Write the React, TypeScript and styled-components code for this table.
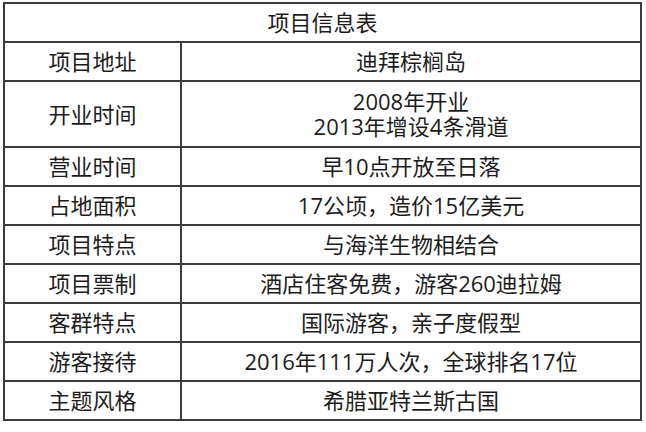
import React from "react";
import styled, { createGlobalStyle } from "styled-components";

const Global = createGlobalStyle`
  html, body { margin: 0; padding: 0; background: #ffffff; }
  body {
    font-family: "Open Sans", "Noto Sans CJK SC", "Noto Sans", sans-serif;
    color: #1c1c1c;
  }
`;

const Page = styled.div`
  width: 646px;
  height: 432px;
  padding: 2px 0 0 3px;
  box-sizing: border-box;
  background: #fff;
`;

const Sheet = styled.div`
  width: 639px;
  box-sizing: border-box;
  border: 2px solid #3b3b3b;
  display: flex;
  flex-direction: column;
`;

const Title = styled.div`
  height: 39px;
  box-sizing: border-box;
  border-bottom: 2px solid #3b3b3b;
  display: flex;
  align-items: center;
  justify-content: center;
  font-size: 22px;
  line-height: 25px;
`;

const Row = styled.div<{ $h: number; $last?: boolean }>`
  height: ${(p) => p.$h}px;
  box-sizing: border-box;
  border-bottom: ${(p) => (p.$last ? "none" : "2px solid #3b3b3b")};
  display: grid;
  grid-template-columns: 177px 1fr;
`;

const Cell = styled.div<{ $divider?: boolean }>`
  box-sizing: border-box;
  border-right: ${(p) => (p.$divider ? "2px solid #3b3b3b" : "none")};
  display: flex;
  flex-direction: column;
  align-items: center;
  justify-content: center;
  font-size: 22px;
  line-height: 25px;
  white-space: nowrap;
`;

const Line = styled.div`
  height: 25px;
  line-height: 25px;
  overflow: visible;
`;

const rows: { label: string; value: string[]; h: number }[] = [
  { label: "项目地址", value: ["迪拜棕榈岛"], h: 39 },
  { label: "开业时间", value: ["2008年开业", "2013年增设4条滑道"], h: 66 },
  { label: "营业时间", value: ["早10点开放至日落"], h: 39 },
  { label: "占地面积", value: ["17公顷，造价15亿美元"], h: 39 },
  { label: "项目特点", value: ["与海洋生物相结合"], h: 39 },
  { label: "项目票制", value: ["酒店住客免费，游客260迪拉姆"], h: 39 },
  { label: "客群特点", value: ["国际游客，亲子度假型"], h: 39 },
  { label: "游客接待", value: ["2016年111万人次，全球排名17位"], h: 39 },
  { label: "主题风格", value: ["希腊亚特兰斯古国"], h: 37 },
];

export default function App() {
  return (
    <>
      <Global />
      <Page>
        <Sheet>
          <Title>项目信息表</Title>
          {rows.map((r, i) => (
            <Row key={r.label} $h={r.h} $last={i === rows.length - 1}>
              <Cell $divider>{r.label}</Cell>
              <Cell>
                {r.value.map((v) => (
                  <Line key={v}>{v}</Line>
                ))}
              </Cell>
            </Row>
          ))}
        </Sheet>
      </Page>
    </>
  );
}
